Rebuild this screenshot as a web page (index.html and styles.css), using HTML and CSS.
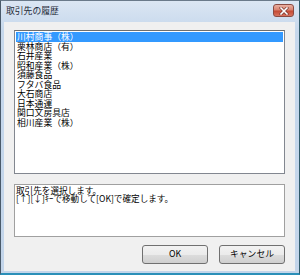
FILE: index.html
```html
<!DOCTYPE html>
<html>
<head>
    <title>取引先の履歴</title>
    <link rel="stylesheet" href="styles.css">
</head>
<body>
    <div class="window">
        <div class="titlebar">
            <span class="title">取引先の履歴</span>
            <div class="close-btn">
                <svg width="10" height="8" viewBox="0 0 10 8">
                    <path d="M2 1 L8 7 M8 1 L2 7" stroke="#7a3a34" stroke-width="3" stroke-linecap="square"/>
                    <path d="M2 1 L8 7 M8 1 L2 7" stroke="#ffffff" stroke-width="1.6" stroke-linecap="square"/>
                </svg>
            </div>
        </div>
        <div class="client">
            <ul class="listbox">
                <li class="selected">川村商事（株）</li>
                <li>栗林商店（有）</li>
                <li>石井産業</li>
                <li>昭和産業（株）</li>
                <li>須藤食品</li>
                <li>フタバ食品</li>
                <li>大石商店</li>
                <li>日本通運</li>
                <li>関口文房具店</li>
                <li>相川産業（株）</li>
            </ul>
            <div class="help">取引先を選択します。<br>[↑][↓]ｷｰで移動して[OK]で確定します。</div>
            <div class="buttons">
                <button class="btn">OK</button>
                <button class="btn">キャンセル</button>
            </div>
        </div>
    </div>
</body>
</html>
```

FILE: styles.css
```css
body {
    margin: 0;
    background-color: #d0dff0;
    font-family: "Noto Sans CJK JP", "DejaVu Sans", sans-serif;
}
.window {
    width: 300px;
    height: 275px;
    box-sizing: border-box;
    border-left: 1px solid #4a5a6a;
    border-top: 1px solid #6a7a8a;
    border-right: 1px solid #2f5a6a;
    border-bottom: 2px solid #2a8fb8;
    background: linear-gradient(#dbe6f3, #c6d8ec 30px, #c3d5ea);
    padding: 0 4px 2px 3px;
    display: flex;
    flex-direction: column;
}
.titlebar {
    height: 21px;
    display: flex;
    align-items: center;
    justify-content: space-between;
    padding: 0 1px 0 2px;
}
.title {
    font-size: 8.8px;
    color: #1e2a38;
    line-height: 1;
    margin-top: -1px;
}
.close-btn {
    width: 19px;
    height: 11px;
    border: 1px solid #8a4a42;
    border-radius: 3px;
    background: linear-gradient(#eab0a2, #d9826f 45%, #c44a34 55%, #d7735e);
    display: flex;
    align-items: center;
    justify-content: center;
    margin-top: -2px;
}
.client {
    flex: 1;
    background-color: #f0f0f0;
    padding: 8px 10px 0 10px;
    display: flex;
    flex-direction: column;
}
.listbox {
    list-style: none;
    margin: 0;
    padding: 1px;
    height: 144px;
    box-sizing: border-box;
    background-color: #fff;
    border: 1px solid #828790;
    border-top-color: #6e6e6e;
}
.listbox li {
    font-size: 8.8px;
    line-height: 9.5px;
    height: 9.5px;
    padding-left: 1px;
    color: #000;
    white-space: nowrap;
}
.listbox li.selected {
    background-color: #3399ff;
    color: #fff;
}
.help {
    margin-top: 10px;
    height: 53px;
    box-sizing: border-box;
    background-color: #fff;
    border: 1px solid #a0a0a0;
    font-size: 8.6px;
    line-height: 8.2px;
    padding: 1px 0 0 1px;
    color: #000;
    white-space: nowrap;
}
.buttons {
    display: flex;
    justify-content: flex-end;
    gap: 11px;
    margin-top: 8px;
}
.btn {
    width: 66px;
    height: 19px;
    border: 1px solid #707070;
    border-radius: 3px;
    background: linear-gradient(#f2f2f2, #ebebeb 50%, #dddddd 50%, #cfcfcf);
    font-family: "Noto Sans CJK JP", "DejaVu Sans", sans-serif;
    font-size: 8.8px;
    color: #000;
    padding: 0;
    line-height: 1;
}
```
